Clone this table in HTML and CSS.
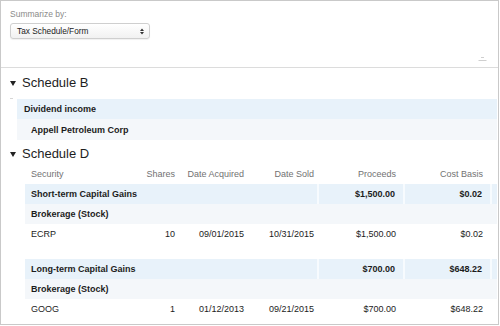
FILE: index.html
```html
<!DOCTYPE html>
<html>
<head>
<meta charset="utf-8">
<link rel="stylesheet" href="styles.css">
</head>
<body>
<div class="frame">
  <div class="toolbar">
    <div class="lbl">Summarize by:</div>
    <div class="select">
      <span>Tax Schedule/Form</span>
      <svg class="arrows" width="4" height="7" viewBox="0 0 4 7"><path d="M0 3L2 0.5L4 3Z M0 4L2 6.5L4 4Z" fill="#333"/></svg>
    </div>
    <svg class="grip" width="9" height="6" viewBox="0 0 9 6"><path d="M3 1.5H6 M0.5 4.5H8.5" stroke="#cfcfcf" stroke-width="1"/></svg>
  </div>

  <h2 class="title"><span class="tri"></span>Schedule B</h2>
  <div class="dash"></div>
  <table class="tbl tbl-b">
    <tr class="sum"><td>Dividend income</td></tr>
    <tr class="sub"><td class="ind">Appell Petroleum Corp</td></tr>
  </table>

  <h2 class="title title-d"><span class="tri"></span>Schedule D</h2>
  <table class="tbl tbl-d">
    <colgroup>
      <col class="c-sec"><col class="c-sh"><col class="c-da"><col class="c-ds"><col class="c-pr"><col class="c-cb"><col class="c-x">
    </colgroup>
    <tr class="head">
      <th class="l">Security</th><th>Shares</th><th>Date Acquired</th><th class="ds">Date Sold</th><th>Proceeds</th><th>Cost Basis</th><th></th>
    </tr>
    <tr class="sum">
      <td colspan="4" class="l">Short-term Capital Gains</td><td class="sep">$1,500.00</td><td class="sep">$0.02</td><td class="sep"></td>
    </tr>
    <tr class="sub"><td colspan="7" class="l">Brokerage (Stock)</td></tr>
    <tr class="data">
      <td class="l">ECRP</td><td>10</td><td>09/01/2015</td><td class="ds">10/31/2015</td><td>$1,500.00</td><td>$0.02</td><td></td>
    </tr>
    <tr class="gap"><td colspan="7"></td></tr>
    <tr class="sum">
      <td colspan="4" class="l">Long-term Capital Gains</td><td class="sep">$700.00</td><td class="sep">$648.22</td><td class="sep"></td>
    </tr>
    <tr class="sub"><td colspan="7" class="l">Brokerage (Stock)</td></tr>
    <tr class="data">
      <td class="l">GOOG</td><td>1</td><td>01/12/2013</td><td class="ds">09/21/2015</td><td>$700.00</td><td>$648.22</td><td></td>
    </tr>
  </table>
</div>
</body>
</html>
```

FILE: styles.css
```css
html, body {
  margin: 0;
  padding: 0;
  background: #fff;
}
body {
  font-family: "Liberation Sans", Arial, Helvetica, sans-serif;
  color: #1c1c1c;
}
.frame {
  box-sizing: border-box;
  width: 499px;
  height: 325px;
  border: 1px solid #c9c9c9;
  overflow: hidden;
}
.toolbar {
  box-sizing: border-box;
  height: 67px;
  border-bottom: 1px solid #dcdcdc;
  padding: 8px 9px 0 9px;
  display: flex;
  flex-direction: column;
  align-items: flex-start;
}
.lbl {
  font-size: 8.5px;
  line-height: 10px;
  color: #8a8a8a;
}
.select {
  box-sizing: border-box;
  margin-top: 4px;
  width: 140px;
  height: 16px;
  border: 1px solid #cfcfcf;
  border-radius: 3px;
  background: linear-gradient(#ffffff, #f1f1f1);
  box-shadow: 0 1px 1px rgba(0,0,0,0.06);
  display: flex;
  align-items: center;
  justify-content: space-between;
  padding: 0 5px 0 6px;
  font-size: 8.3px;
  color: #222;
}
.grip {
  margin-top: auto;
  margin-bottom: 5px;
  align-self: flex-end;
  margin-right: 2px;
}
.title {
  margin: 7px 0 0 0;
  height: 16px;
  line-height: 16px;
  font-size: 13px;
  font-weight: normal;
  color: #1e1e1e;
  display: flex;
  align-items: center;
}
.title-d {
  margin-top: 6px;
}
.tri {
  width: 0;
  height: 0;
  border-left: 3px solid transparent;
  border-right: 3px solid transparent;
  border-top: 5px solid #222;
  margin: 1px 6px 0 9px;
}
.dash {
  width: 3px;
  height: 1px;
  background: #d6d6d6;
  margin: 7px 0 0 9px;
}
.tbl {
  border-collapse: collapse;
  table-layout: fixed;
  font-size: 9px;
}
.tbl-b {
  margin-left: 16px;
  width: 480px;
}
.tbl-b td {
  padding: 0 7px;
  font-weight: bold;
}
.tbl-b .sum td { height: 20px; }
.tbl-b .sub td { height: 21px; }
.tbl-b td.ind { padding-left: 14px; }

.sum td {
  background: #e8f2fa;
  font-weight: bold;
}
.sub td {
  background: #f4f7fa;
  font-weight: bold;
}
.tbl-d {
  margin-left: 24px;
  width: 472px;
}
.c-sec { width: 115px; }
.c-sh { width: 43px; }
.c-da { width: 69px; }
.c-ds { width: 66px; }
.c-pr { width: 86px; }
.c-cb { width: 87px; }
.c-x { width: 6px; }
.tbl-d th, .tbl-d td {
  padding: 0 8px 0 0;
  text-align: right;
  white-space: nowrap;
}
.tbl-d th.ds, .tbl-d td.ds {
  padding-right: 4px;
}
.tbl-d .l {
  text-align: left;
  padding-left: 6px;
}
.tbl-d th {
  font-weight: normal;
  color: #727272;
  height: 22px;
  padding-top: 2px;
  box-sizing: border-box;
}
.tbl-d .sum td { height: 20px; }
.tbl-d .sub td { height: 20px; }
.tbl-d .data td { height: 20px; color: #1c1c1c; }
.tbl-d .gap td { height: 15px; padding: 0; }
.tbl-d td.sep {
  border-left: 2px solid #f7fbfe;
}
```
